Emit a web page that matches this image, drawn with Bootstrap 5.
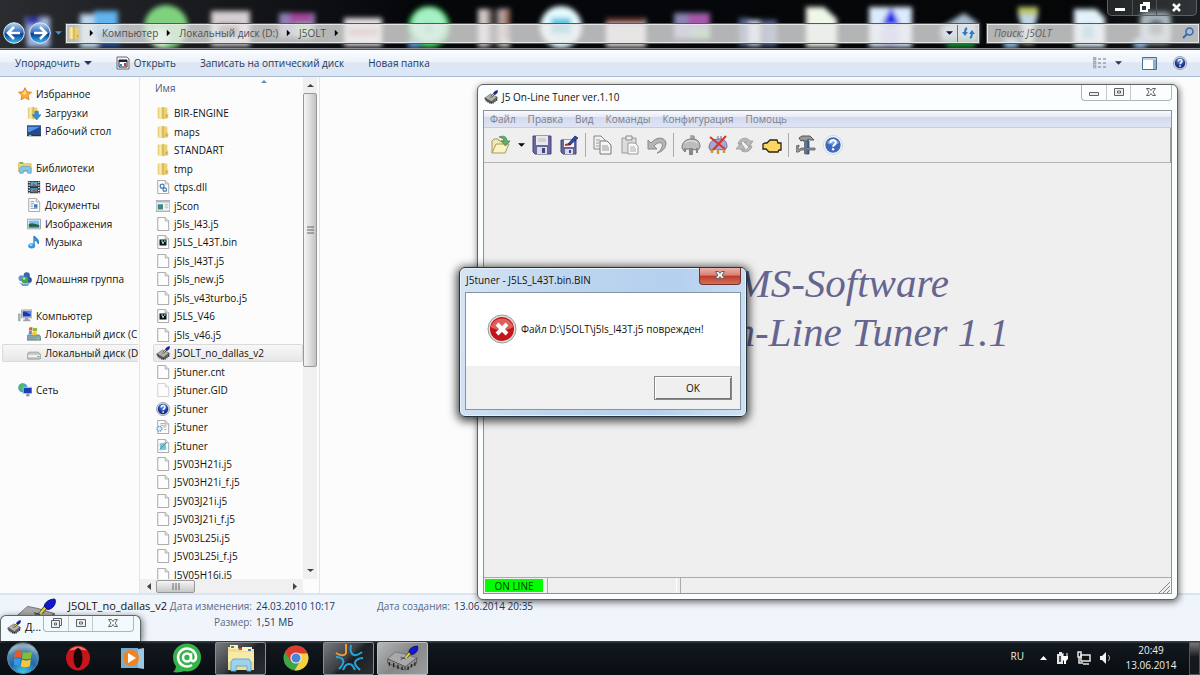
<!DOCTYPE html>
<html lang="ru">
<head>
<meta charset="utf-8">
<meta name="viewport" content="width=device-width, initial-scale=1">
<title>J5OLT</title>
<link href="https://cdn.jsdelivr.net/npm/bootstrap@5.3.0/dist/css/bootstrap.min.css" rel="stylesheet">
<style>
body{font-family:"Open Sans","Noto Sans",sans-serif;font-size:10px;line-height:16px;color:#111;background:#05080b;overflow:hidden}
svg{display:block;flex-shrink:0}
.bare{border:0;background:none;padding:0;color:inherit;font:inherit;display:flex;align-items:center}
a{color:inherit;text-decoration:none}
.i14{width:14px;height:14px}.i20{width:20px;height:20px}
.i30{width:30px;height:30px}.i34{width:34px;height:34px}
/* explorer */
.glass{height:49px;background:linear-gradient(90deg,#2a2c2f,#05070a 34%,#040608 90%,#1b1e20);border-bottom:1px solid #8b8f93;overflow:hidden}
.glass-art{inset:0;width:100%;height:50px}
.win-ctl{top:0;right:3px;height:16px;border:1px solid #5d6165;border-top:0;border-radius:0 0 5px 5px;background:rgba(110,118,124,.25)}
.win-ctl button{width:24px;justify-content:center;padding-bottom:2px}
.win-ctl button+button{border-left:1px solid #4d5154}
.win-ctl button:last-child{width:40px}
.addr-row{padding:22px 1px 5px 3px}
.recent{color:#4b8fc4}
.addr{height:19px;background:rgba(235,235,235,.76);border:1px solid #e4e6e8;outline:1px solid #55595c;color:#4b4f53}
.addr .crumb{gap:8px;color:#000}
.addr .crumb a{color:#4b4f53}
.reload{width:21px;justify-content:center}
.seek{width:212px}
.seek input{min-width:0;border:0;background:none;padding:0 6px;font-style:italic;font-size:10px;outline:0}
.seek input::placeholder{color:#5b5f62;opacity:1}
.cmdbar{height:28px;background:linear-gradient(#fafcff,#edf3fb 45%,#dce6f4 50%,#dde8f6);border-bottom:1px solid #a9bbd5;border-top:1px solid #555;color:#1e395b;padding:0 13px 0 15px}
.cols{background:#fcfcfc;min-height:0}
.side{width:140px;border-right:1px solid #dbe6f3;padding:8px 1px 0 2px;overflow:hidden}
.tree,.files{display:grid;grid-auto-rows:minmax(0,1fr);list-style:none;margin:0;padding:0}
.tree{height:314px}
.tree a,.files a{display:flex;align-items:center;height:100%;white-space:nowrap;overflow:hidden;border:1px solid transparent;border-radius:2px}
.tree a{gap:4px;padding-left:15px}
.tree .sub{padding-left:24px}
.files a{gap:4px;padding-left:2px}
.tree .on,.files .on{background:linear-gradient(#f7f7f7,#e7e7e7);border-color:#dadada}
.tree .on{border-right:0;border-radius:2px 0 0 2px}
.listing{width:180px;border-right:1px solid #dbe6f3}
.colhead{height:27px;padding:3px 36px 0 15px;color:#4d607c}
.files{height:480px;margin-left:13px}
.clip{overflow:hidden;min-height:0}
.vbar{width:14px;background:#f0f0f0;margin-right:2px;padding:2px 0}
.vthumb{height:274px;border:1px solid #989898;border-radius:2px;background:linear-gradient(90deg,#f5f5f5,#dcdcdc 55%,#c2c2c2)}
.hbar{height:14px;background:#f0f0f0;margin-right:16px;padding:0 5px 0 6px}
.hthumb{width:39px;height:13px;border:1px solid #989898;border-radius:2px;background:linear-gradient(#f5f5f5,#dedede 50%,#c6c6c6)}
.info{height:48px;background:#f0f4fb;border-top:2px solid #d9e5f3;padding:3px 0 0 16px;color:#5a6b82}
.info .val{color:#1e395b}
.info-chip{width:42px;height:42px;margin-right:10px}
.info-grid{display:grid;grid-template-columns:84px 115px 75px auto;column-gap:4px;align-content:start}
.sel-name{font-size:11px;width:100px;color:#111}
/* floating windows */
.aero{background:#fbfefe;border:1px solid #5f6467;border-radius:6px;box-shadow:1px 2px 7px rgba(0,0,0,.6)}
.tuner{left:477px;top:84px;right:22px;bottom:75px;padding:0 5px 5px}
.tuner-title{height:25px;padding:0 0 2px 1px;gap:4px}
.ctl{border:1px solid #b1b4b7;border-top:0;border-radius:0 0 4px 4px;height:16px}
.ctl button{justify-content:center;width:24px}
.ctl button+button{border-left:1px solid #c6c9cc}
.ctl button:last-child{width:41px}
.client{border:1px solid #8f9193;background:#efefef;min-height:0}
.menu{height:17px;background:linear-gradient(#fafbfe,#e8ebf7 35%,#d4daee 40%,#dfe4f4);border-bottom:1px solid #c8cbd8;color:#7b7f88;padding-left:6px;gap:12px}
.tools{height:35px;border-bottom:1px solid #b5b5b5;border-right:1px solid #999;padding-left:3px}
.tools button{width:27px;height:27px;justify-content:center}
.tools .drop{width:14px}
.tsep{width:1px;height:24px;background:#aaa;margin:0 3px}
.splash{font:italic 41px/49px "Liberation Serif",serif;color:#65658f;padding:96px 0 0 172px}
.splash .l1{padding-left:60px}
.stat{height:16px;gap:3px;border-top:1px solid #aaa}
.stat>div{border-left:1px solid #aaa;border-right:1px solid #fff}
.stat .online{width:60px;background:#0f0;color:#030;text-align:center;line-height:15px;border:1px solid #eee}
.stat .cell{width:130px}
.msg{left:459px;top:267px;width:288px;height:150px;border:1px solid #26323c;border-radius:6px;background:linear-gradient(100deg,#d5e5f5,#bdd5ee 35%,#b4d0ee 70%,#cfe2f4);box-shadow:inset 0 0 0 1px #e6f2fb,0 2px 10px 2px rgba(0,0,0,.75);padding:0 5px 6px}
.msg-title{height:24px;padding-left:1px}
.msg-close{width:42px;height:17px;justify-content:center;border:1px solid #70322e;border-top:0;border-radius:0 0 4px 4px;background:linear-gradient(#eab3a8,#d98072 45%,#bd3a27 50%,#d4705a)}
.msg-body{border:1px solid #8494a5;background:#fff;min-height:0}
.msg-text{padding:0 0 2px 21px}
.msg-foot{height:43px;background:#f0f0f0;padding:0 8px 0 0}
.okbtn{width:78px;height:24px;justify-content:center;background:#efefef;border:1px solid #888;box-shadow:inset 1px 1px #fff,inset -1px -1px #777}
.mini{left:0;bottom:34px;width:141px;height:26px;padding:0 6px 3px;border-bottom:0;border-radius:6px 6px 0 0;background:#f3fafd}
.mini-t{font-size:11px;width:19px}
/* taskbar */
.taskbar{height:34px;background:linear-gradient(#3f484e,#12181d 8%,#080d12);color:#eee;gap:3px}
.startb{width:50px;height:34px;justify-content:center;padding-right:4px}
.tb{width:51px;height:33px;justify-content:center;border:1px solid transparent;border-radius:2px}
.tb.open{border-color:#8a8e91;background:linear-gradient(135deg,#777b7e,#3c4044 45%,#1c2024 55%,#2b2f33)}
.tb.front{border-color:#bbb;background:linear-gradient(135deg,#b5b7b8,#858789 50%,#9a9c9d)}
.lang{padding-bottom:4px}
.clock{width:60px;line-height:15px;text-align:center}
.peek{width:11px;height:33px;border:1px solid #555;background:linear-gradient(#777,#16191b 45%)}
</style>
</head>
<body>
<svg width="0" height="0" class="position-absolute" aria-hidden="true">
<defs>
<linearGradient id="gy" x2="1" y2="0"><stop stop-color="#e2c35a"/><stop offset=".4" stop-color="#fbeeb0"/><stop offset="1" stop-color="#dfbb50"/></linearGradient>
<radialGradient id="gb" cx=".5" cy=".3"><stop stop-color="#6d9be8"/><stop offset="1" stop-color="#15358f"/></radialGradient>
<linearGradient id="gn" x2="0" y2="1"><stop stop-color="#b8d8f5"/><stop offset=".48" stop-color="#2c6cba"/><stop offset=".55" stop-color="#083c91"/><stop offset="1" stop-color="#3cc3f6"/></linearGradient>
<radialGradient id="gw" cx=".5" cy="1" r=".9"><stop stop-color="#3fd0f5"/><stop offset=".5" stop-color="#1f6aa8"/><stop offset=".8" stop-color="#4f86ae"/><stop offset="1" stop-color="#a9c6da"/></radialGradient>
<symbol id="folder" viewBox="0 0 16 16"><path d="M2 2l3-1 4 1v12l-4 1-3-1z" fill="url(#gy)"/><path d="M8 1l5 1v6l1 1v5l-6 1z" fill="#ecd071"/><path d="M8 1v14" stroke="#c19a36" stroke-width=".8"/><path d="M11 10h2v3h-2z" fill="#bda860"/></symbol>
<symbol id="page" viewBox="0 0 16 16"><path d="M2 .5h8.500l4 4v11H2z" fill="#fdfdfd" stroke="#9b9b9b"/><path d="M10.500 .5v4h4" fill="#ececec" stroke="#a6a6a6"/></symbol>
<symbol id="dll" viewBox="0 0 16 16"><use href="#page"/><circle cx="7" cy="7" r="2.200" fill="none" stroke="#4678b0" stroke-width="1.400"/><circle cx="10" cy="11" r="2" fill="none" stroke="#4678b0" stroke-width="1.400"/></symbol>
<symbol id="exe" viewBox="0 0 16 16"><path d="M0 2h16v12H0z" fill="#f4f4f4" stroke="#889"/><path d="M1 2h14v2H1z" fill="#a9bdd0"/><path d="M2 6h6v6H2z" fill="#3c8a80"/><path d="M10 6h4M10 8h4M10 10h4" stroke="#b8bcc0"/></symbol>
<symbol id="bin" viewBox="0 0 16 16"><use href="#page"/><path d="M4 5h8v7H4z" fill="#0b1414"/><path d="M6 6h2v2H6zM9 6h2v2H9z" fill="#6aa"/><path d="M7 8h2v2H7z" fill="#ddd"/></symbol>
<symbol id="help" viewBox="0 0 16 16"><circle cx="8" cy="8" r="7.500" fill="#d6dae0" stroke="#8b8f98" stroke-width=".8"/><circle cx="8" cy="8" r="6" fill="url(#gb)"/><path d="M5.700 6.200c.2-3 4.900-2.700 4.600 0-.2 1.500-2.200 1.400-2.200 3.200" fill="none" stroke="#fff" stroke-width="1.600"/><circle cx="8.100" cy="11.500" r="1" fill="#fff"/></symbol>
<symbol id="help2" viewBox="0 0 20 20"><circle cx="10" cy="10" r="9.500" fill="#f6f9fd" stroke="#c3cddd" stroke-width=".8"/><circle cx="10" cy="10" r="7.700" fill="#3c69b8"/><path d="M4 8a6.500 6.500 0 0 1 12 0c-3 2-9 2-12 0z" fill="#7fa3dc"/><path d="M7.300 8c.2-3.800 5.900-3.400 5.500 0-.3 2-2.700 1.800-2.700 3.800" fill="none" stroke="#fff" stroke-width="1.900"/><circle cx="10.100" cy="14.200" r="1.200" fill="#fff"/></symbol>
<symbol id="ini" viewBox="0 0 16 16"><use href="#page"/><path d="M5 4h5M5 6h7M8 8h4M9 11h3" stroke="#9ab"/><circle cx="4" cy="10" r="2.800" fill="#dfeaf2" stroke="#6c93b5" stroke-width="1.500" stroke-dasharray="1.500 .7"/></symbol>
<symbol id="log" viewBox="0 0 16 16"><use href="#page"/><path d="M4 5l7-1 1 8-7 1z" fill="#7cc4d4"/><path d="M4 12l8-8" stroke="#3d8fa8"/></symbol>
<symbol id="chip" viewBox="0 0 32 32"><path d="M2 18l13-9 15 7-13 11z" fill="#b2b2b2" stroke="#333"/><path d="M2 18v3l15 10v-4zM17 27v4l13-10v-5z" fill="#777" stroke="#222"/><path d="M5 22v4M9 24v5M13 27v4M21 27v4M25 24v4M29 21v4" stroke="#111" stroke-width="2"/><path d="M13 15l4 3M14 19l4-5" stroke="#444"/><path d="M17 15l8-8" stroke="#5d5a20" stroke-width="4"/><path d="M17 15l7-7" stroke="#e5d94a" stroke-width="2"/><path d="M22 8c0-4 5-7 9-7 1 5-3 9-7 9z" fill="#1420c8" stroke="#000050"/></symbol>
<symbol id="chipBig" viewBox="0 0 40 30"><path d="M2 16l9-8 10 2 16 5-13 11z" fill="#a9a9a9" stroke="#666" stroke-width=".8"/><path d="M2 16v5l20 8v-4zM23 25v4l13-8v-6z" fill="#8f8f8f" stroke="#444" stroke-width=".8"/><path d="M4 20v4M9 21v5M14 23v5M19 25v4M26 25v4M30 22v4M34 20v4" stroke="#222" stroke-width="1.600"/><path d="M17 14l6 2M17 17l7-4" stroke="#444"/><path d="M24 14l5-6" stroke="#66611d" stroke-width="4"/><path d="M23 15l6-7" stroke="#e5d94a" stroke-width="2"/><path d="M27 8c0-4 5-7 10-7 2 4-2 10-7 10z" fill="#1018d4" stroke="#000050" stroke-width=".8"/></symbol>
<symbol id="star" viewBox="0 0 16 16"><path d="M8 .8l2.200 4.700 5.200.6-3.900 3.400 1.100 5.200L8 12.100l-4.600 2.600 1.100-5.200L.6 6.100l5.200-.6z" fill="#fbb03c" stroke="#d97a22"/><path d="M8 3l1.300 3.500L8 9 4 6.800l2.700-.5z" fill="#ffe08a"/></symbol>
<symbol id="down" viewBox="0 0 16 16"><use href="#folder" x="-1"/><path d="M9 6h4v4h3l-5 6-5-6h3z" fill="#3490dc" stroke="#1c68b0" stroke-width=".6"/></symbol>
<symbol id="desk" viewBox="0 0 16 16"><path d="M0 2h16v10H0z" fill="#1c4b9d" stroke="#456"/><path d="M1 3h14L3 9H1z" fill="#5c93dc"/><path d="M0 12h16v2H0z" fill="#20344f"/><path d="M2 13h3" stroke="#7fd"/></symbol>
<symbol id="lib" viewBox="0 0 16 16"><path d="M0 3l1-1h4l1 1h9v9H0z" fill="#f0d67d" stroke="#c9a750" stroke-width=".7"/><path d="M2 1h4v2H2z" fill="#70b060"/><path d="M2 8l2-2h9l2 2v6h-4v-3H6v3H2z" fill="#86c6e6" stroke="#4a95bd" stroke-width=".7"/></symbol>
<symbol id="video" viewBox="0 0 16 16"><path d="M1 1h14v14H1z" fill="#243640"/><path d="M4 2h8v5H4z" fill="#58a5d4"/><path d="M4 9h8v5H4z" fill="#4f90bd"/><path d="M7 3l4 4H6zM6 14l3-4 3 4z" fill="#a6552e"/><path d="M2.500 2v13M13.500 2v13" stroke="#fff" stroke-width="1.500" stroke-dasharray="1.500 1.500"/></symbol>
<symbol id="doc" viewBox="0 0 16 16"><use href="#page"/><path d="M4 4h4M4 6h4M4 8h3M4 10h3M4 12h8" stroke="#8a9fbb"/><path d="M8 7h4v4H8z" fill="#3f77b8"/></symbol>
<symbol id="pic" viewBox="0 0 16 16"><path d="M.5 2.500h15v11H.5z" fill="#fff" stroke="#8c959c"/><path d="M2 4h12v8H2z" fill="#7cc0ea"/><path d="M2 8l4-1 8 2v3H2z" fill="#255f4b"/><path d="M2 11h12v1H2z" fill="#3f9ac0"/></symbol>
<symbol id="music" viewBox="0 0 16 16"><path d="M8 12V1c1 3 6 3 5 9-1-3-2-4-4-4" fill="#4aa6e6" stroke="#2c7fc4" stroke-width="1.400"/><ellipse cx="5.300" cy="12.300" rx="4" ry="3" fill="#3593dd"/><ellipse cx="4.500" cy="11.500" rx="2" ry="1.200" fill="#9dd3f7"/></symbol>
<symbol id="home" viewBox="0 0 16 16"><circle cx="10" cy="4" r="3.600" fill="#3564b8"/><circle cx="4" cy="7" r="3.400" fill="#5c95d5"/><circle cx="12.500" cy="9" r="3.300" fill="#2b4f9f"/><circle cx="8" cy="9" r="4" fill="#47a34b"/><circle cx="7" cy="7.500" r="1.500" fill="#b9e3a9"/><path d="M1 11c4 3 8 3 13 1l-3 4H5z" fill="#6e9fd8"/></symbol>
<symbol id="comp" viewBox="0 0 16 16"><path d="M0 5h3v9H0z" fill="#a9b1ad"/><path d="M4 1h12v9H4z" fill="#d0d5da" stroke="#8b9299" stroke-width=".8"/><path d="M5.500 2.500h9v6h-9z" fill="#1738b5"/><path d="M8 2.500h6.500v4z" fill="#5f87e8"/><path d="M8 10h4v2h2v2H6v-2h2z" fill="#9ba2a8"/></symbol>
<symbol id="disk" viewBox="0 0 16 16"><path d="M2 7h11l3 3v4l-2 1H1l-1-1v-4z" fill="#c9ccce" stroke="#868b8e" stroke-width=".8"/><path d="M1 9.500h14v4H1z" fill="#f2f2f2" stroke="#989da0" stroke-width=".6"/><path d="M12 12h2" stroke="#3b9b3b"/></symbol>
<symbol id="flag" viewBox="0 0 16 16"><path d="M1 1c2-1 4-1 6 0L6 7C4 6 2 6 0 7z" fill="#e75a28"/><path d="M8 1.500c3 1 5 1 8 0l-1 6c-3 1-5 1-8 0z" fill="#83bd36"/><path d="M0 8c2-1 4-1 6 0l-1 6c-2-1-4-1-6 0z" fill="#3d94e5"/><path d="M7 8.500c3 1 5 1 8 0l-1 6c-3 1-5 1-8 0z" fill="#f8c63a"/></symbol>
<symbol id="sysdisk" viewBox="0 0 16 16"><path d="M1 9h13l2 3v3H0v-3z" fill="#8ba2ac" stroke="#5f747d" stroke-width=".8"/><use href="#flag" x="2" y="0" width="10" height="10"/><path d="M11 13.500h3" stroke="#6f6"/></symbol>
<symbol id="net" viewBox="0 0 16 16"><circle cx="5.500" cy="5.500" r="5.300" fill="#3ba5d8"/><path d="M2 2c3-3 6-1 5 2S4 6 5 9c-3 0-5-3-3-7z" fill="#55b85a"/><path d="M6 5h10v7H6z" fill="#1a3fb5" stroke="#bcc5cd"/><path d="M10 12h3v3h-4z" fill="#8a9299"/></symbol>
<symbol id="min" viewBox="0 0 16 12"><path d="M3.500 5.500h9v3h-9z" fill="#eee" stroke="#5d636b"/></symbol>
<symbol id="max" viewBox="0 0 16 12"><path d="M3.500 1.500h9v7h-9z" fill="#eee" stroke="#5d636b"/><path d="M6.500 4h3v2h-3z" fill="#fff" stroke="#5d636b"/></symbol>
<symbol id="restore" viewBox="0 0 16 12"><path d="M5.500 .5h8v7h-8z" fill="#eee" stroke="#5d636b"/><path d="M3.500 2.500h8v7h-8z" fill="#eee" stroke="#5d636b"/><path d="M6.500 5h2v2h-2z" fill="#fff" stroke="#5d636b"/></symbol>
<symbol id="cross" viewBox="0 0 16 12"><path d="M3.500 1.500h3L8 3.500l1.500-2h3L10 5l2.500 3.500h-3L8 6.500l-1.500 2h-3L6 5z" fill="#fff" stroke="#5d636b"/></symbol>
<symbol id="tri" viewBox="0 0 8 6"><path d="M0 1h8L4 5z" fill="currentColor"/></symbol>
<symbol id="triR" viewBox="0 0 6 8"><path d="M1 0v8l4-4z" fill="currentColor"/></symbol>
<symbol id="tOpen" viewBox="0 0 20 20"><path d="M1 18V6l2-2h4l1 2h6v3" fill="#f3e9b2" stroke="#a5985e"/><path d="M1 18L5 9h13l-4 9z" fill="#fbf3c4" stroke="#a5985e"/><path d="M8 2c5-2 8 0 8 4h3l-4.500 5L10 6h3c0-2-2-3-5-4z" fill="#66ab69" stroke="#39823e" stroke-width=".7"/></symbol>
<symbol id="tSave" viewBox="0 0 20 20"><path d="M1 1h18v18H3l-2-2z" fill="#66669c" stroke="#45457a"/><path d="M4 1h12v9H4z" fill="#e8e8ec"/><path d="M6 4h8M6 6h8" stroke="#bbb"/><path d="M5 12h10v7H5z" fill="#d8dae4"/><path d="M10 13h3v5h-3z" fill="#44447e"/></symbol>
<symbol id="tSaveAs" viewBox="0 0 20 20"><path d="M2 5h15v14H4l-2-2z" fill="#66669c" stroke="#45457a"/><path d="M5 5h10v7H5z" fill="#f2f2f4"/><path d="M6 10l6-1" stroke="#c22" stroke-width="2"/><path d="M6 14h8v5H6z" fill="#d8dae4"/><path d="M10 15h2v3h-2z" fill="#44447e"/><path d="M9 9l7-8 3 2-8 7z" fill="#2a4cb0" stroke="#181840" stroke-width=".7"/></symbol>
<symbol id="tCopy" viewBox="0 0 20 20"><path d="M1 1h7l4 4v9H1z" fill="#f1f1f1" stroke="#888"/><path d="M7 6h7l4 4v9H7z" fill="#f5f5f5" stroke="#777"/><path d="M3 5h4M3 8h3M3 11h3M9 11h6M9 13h7M9 15h7" stroke="#999"/></symbol>
<symbol id="tPaste" viewBox="0 0 20 20"><path d="M2 3h14v15H2z" fill="#dcdcdc" stroke="#999"/><path d="M6 1h6v4H6z" fill="#eee" stroke="#888"/><path d="M8 8h7l3 3v8H8z" fill="#fafafa" stroke="#999"/><path d="M10 12h5M10 14h6M10 16h6" stroke="#aaa"/></symbol>
<symbol id="tUndo" viewBox="0 0 20 20"><path d="M1 5v9h9L7 11c4-5 10-4 8 1-1 3-3 5-5 6 5-1 9-5 9-10C18 2 10 1 4 8z" fill="#b5b5b5" stroke="#888"/></symbol>
<symbol id="tPlug" viewBox="0 0 20 20"><path d="M10 5V1h2v4M13 5V1" stroke="#999" fill="none" stroke-width="1.500"/><path d="M1 13c0-6 4-9 10-9s8 3 8 8l-2 3-11-1-3 2z" fill="#bcbcbc" stroke="#777"/><path d="M4 8c3-3 9-3 12 0" stroke="#eee" fill="none"/><path d="M4 13v4M9 13v6h2v-6M16 13v5" stroke="#888" stroke-width="2" fill="none"/></symbol>
<symbol id="tUnplug" viewBox="0 0 20 20"><path d="M10 5V1M13 5V1" stroke="#999" stroke-width="1.500"/><path d="M1 13c0-6 4-9 10-9s8 3 8 8l-2 3-11-1-3 2z" fill="#a5a8d8" stroke="#6d6f9b"/><path d="M4 13v5M10 14v5M16 13v5" stroke="#c69a3a" stroke-width="2.500"/><path d="M2 2l15 12M18 1L5 15" stroke="#d8342a" stroke-width="2"/></symbol>
<symbol id="tSync" viewBox="0 0 20 20"><path d="M3 9c1-6 9-8 12-3h3l-4 6-5-5h3c-2-2-6-1-6 2zM17 11c-1 6-9 8-12 3H1l5-6 4 6H7c3 2 7 0 7-3z" fill="#b9b9b9" stroke="#999" stroke-width=".8"/></symbol>
<symbol id="tEng" viewBox="0 0 20 20"><path d="M1 9l2-1h2l3-3h7l1 3h3v7h-2l-1 2H7l-3-3H1z" fill="#fbd667" stroke="#2c2510" stroke-width="1.300"/></symbol>
<symbol id="tTool" viewBox="0 0 20 20"><path d="M3 3l3-2h8l4 4h-4l-2-1v3H8V5L5 6z" fill="#999" stroke="#555"/><path d="M9 6h4v13H9z" fill="#3567a8" stroke="#243c68" stroke-width=".7"/><path d="M0 11l3-1v2H2v2h2l1-1h14v2H5l-2 2H0z" fill="#999" stroke="#555" stroke-width=".7"/><path d="M8 5h3v14H8z" fill="#6b7484"/></symbol>
<filter id="soft" x="-5%" y="-20%" width="110%" height="140%"><feGaussianBlur stdDeviation="2.500"/></filter>
</defs>
</svg>

<div class="vh-100 d-flex flex-column position-relative">
<main class="flex-grow-1 d-flex flex-column clip">
<header class="glass position-relative flex-shrink-0">
<svg class="glass-art position-absolute" viewBox="0 0 1200 50" preserveAspectRatio="xMinYMin slice" aria-hidden="true"><g filter="url(#soft)">
<path d="M25 17h25v30H27z" fill="#a2b4dc"/><path d="M26 17h14v8H26z" fill="#3138b0"/>
<path d="M80 14h18v34H80z" fill="#bcd6ec"/><path d="M94 11h24v26H94z" fill="#62b4ee"/><path d="M98 32h22v14H98z" fill="#1b57a4"/>
<circle cx="166" cy="27" r="22" fill="#7ed27e"/><circle cx="160" cy="38" r="9" fill="#e2fbdc"/>
<path d="M211 11h39v35h-39z" fill="#d5cfd3"/><path d="M218 24h22v14h-22z" fill="#6f5650"/>
<path d="M279 13h36v24h-36z" fill="#8c7fb0"/><path d="M290 13h22v10h-22z" fill="#a547a0"/><path d="M295 24h16v14h-16z" fill="#91c68e"/>
<path d="M344 18h38v28h-38z" fill="#e8e0e4"/><path d="M348 28h30v8h-30z" fill="#cf8f86"/>
<circle cx="429" cy="27" r="21" fill="#2fc14f"/><circle cx="429" cy="25" r="17" fill="#a5f0c5"/><circle cx="429" cy="29" r="5" fill="#6bd694"/><path d="M408 40h12v8h-12z" fill="#5a8fd0"/>
<path d="M478 9h32v38h-32z" fill="#cfc8c6"/><path d="M488 9h12v38h-12z" fill="#473d3e"/><path d="M503 10h7v30h-7z" fill="#a06c60"/>
<circle cx="561" cy="27" r="21" fill="#e5faff"/><path d="M551 18h20v16h-20z" fill="#58c5df"/>
<path d="M606 19h40v28h-40z" fill="#dcd1d1"/><path d="M606 18h39v6h-39z" fill="#7a3d35"/>
<path d="M674 13h36v26h-36z" fill="#8883b4"/><path d="M688 14h22v12h-22z" fill="#a656ab"/><path d="M690 29h20v9h-20z" fill="#76b877"/>
<path d="M739 18h10v28h-10zM763 20h14v26h-14z" fill="#55628f"/><path d="M749 20h12v26h-12z" fill="#cbd6ec"/>
<path d="M806 7h18l13 12v28h-31z" fill="#eff7e9"/>
<path d="M869 7h43v40h-43z" fill="#dcebfc"/><path d="M891 7l9 18h-18z" fill="#151fe6"/><circle cx="890" cy="36" r="10" fill="#c4bdf4"/>
<path d="M940 28l24-15 14 10v18h-36z" fill="#a9bed0"/><path d="M947 38h28v10h-28z" fill="#14802e"/>
<path d="M1018 7h20v8h-20z" fill="#bbc766"/><path d="M1018 15h20l-5 16h-10z" fill="#bfd5e8"/><path d="M1004 38h14v10h-14z" fill="#8ab2dc"/><path d="M1022 30h12v14h-12z" fill="#c9c9b8"/>
<path d="M1074 9h22l9 9v29h-31z" fill="#e3f2fb"/><path d="M1082 25h12v14h-12z" fill="#6ec4e6"/>
<rect x="1140" y="12" width="31" height="32" rx="6" fill="#a9b5bd"/><circle cx="1156" cy="28" r="8" fill="#4c555c"/><path d="M1134 38h12v10h-12z" fill="#8ab2dc"/>
</g></svg>
<div class="addr-row position-relative d-flex align-items-center">
<button class="bare" aria-label="Назад"><svg width="22" height="22" viewBox="0 0 22 22"><circle cx="11" cy="11" r="10.300" fill="url(#gn)" stroke="#dbe6f0"/><path d="M17 11H6M11 5l-6 6 6 6" stroke="#fff" stroke-width="2.600" fill="none"/></svg></button>
<button class="bare ms-1" aria-label="Вперёд"><svg width="22" height="22" viewBox="0 0 22 22"><circle cx="11" cy="11" r="10.300" fill="url(#gn)" stroke="#dbe6f0"/><path d="M5 11h11M11 5l6 6-6 6" stroke="#fff" stroke-width="2.600" fill="none"/></svg></button>
<button class="bare ms-1 recent" aria-label="Недавние"><svg width="7" height="6"><use href="#tri"/></svg></button>
<nav class="addr flex-grow-1 d-flex align-items-center ms-1" aria-label="Путь">
<svg class="i14"><use href="#folder"/></svg>
<div class="crumb d-flex align-items-center ms-2">
<svg width="5" height="8"><use href="#triR"/></svg><a href="#">Компьютер</a>
<svg width="5" height="8"><use href="#triR"/></svg><a href="#">Локальный диск (D:)</a>
<svg width="5" height="8"><use href="#triR"/></svg><a href="#">J5OLT</a>
<svg width="5" height="8"><use href="#triR"/></svg></div>
<button class="bare ms-auto me-1" aria-label="Список"><svg width="7" height="6" color="#101048"><use href="#tri"/></svg></button>
<button class="bare h-100 reload border-start border-secondary" aria-label="Обновить"><svg width="13" height="14" viewBox="0 0 13 14"><path d="M5 2c-2 1-2 3-2 5M8 12c2-1 2-3 2-5" stroke="#2b7cc4" stroke-width="2" fill="none"/><path d="M0 6h6l-3 4zM7 8h6l-3-4z" fill="#2b7cc4"/></svg></button>
</nav>
<form class="addr seek d-flex align-items-center ms-2"><input class="flex-grow-1" type="search" placeholder="Поиск: J5OLT" aria-label="Поиск"><svg width="12" height="12" class="me-1"><circle cx="7.500" cy="4.500" r="3.500" fill="none" stroke="#2b6fb8" stroke-width="1.500"/><path d="M5 7l-4 4" stroke="#2b6fb8" stroke-width="2"/></svg></form>
</div>
<div class="win-ctl d-flex position-absolute">
<button class="bare" aria-label="Свернуть"><svg width="12" height="12"><path d="M1 7h10v3H1z" fill="#fff"/></svg></button>
<button class="bare" aria-label="Восстановить"><svg width="12" height="12"><path d="M4 2h6v6M2 4h6v6H2z" stroke="#fff" stroke-width="2" fill="none"/></svg></button>
<button class="bare" aria-label="Закрыть"><svg width="12" height="12"><path d="M2 3l7 7M9 3l-7 7" stroke="#fff" stroke-width="2.500"/></svg></button>
</div>
</header>
<div class="cmdbar flex-shrink-0 d-flex align-items-center">
<button class="bare gap-1">Упорядочить <svg width="8" height="6"><use href="#tri"/></svg></button>
<button class="bare gap-1 ms-4"><svg width="14" height="14"><path d="M1 1h10l2 2v10H1z" fill="#f4f4f4" stroke="#667"/><path d="M3 4h8v7H3z" fill="#fff" stroke="#223"/><path d="M3 4h8v2H3z" fill="#223"/><path d="M4 8h2v2H4z" fill="#28c"/><path d="M8 7h2v3H8z" fill="#d33"/></svg>Открыть</button>
<button class="bare ms-4">Записать на оптический диск</button>
<button class="bare ms-4">Новая папка</button>
<button class="bare ms-auto gap-2" aria-label="Вид"><svg width="14" height="12"><path d="M0 0h3v3H0zM0 4h3v3H0zM0 8h3v3H0z" fill="#c9b6b4" stroke="#8494a8" stroke-width=".5"/><path d="M5 2h3M10 2h3M5 6h3M10 6h3M5 10h3M10 10h3" stroke="#6a7c92"/></svg><svg width="7" height="6"><use href="#tri"/></svg></button>
<button class="bare ms-3" aria-label="Область просмотра"><svg width="15" height="13" class="ms-1"><path d="M.5.5h14v12H.5z" fill="#fff" stroke="#4d6f92"/><path d="M1 1h13v2H1z" fill="#b9cfe2"/><path d="M11 3h3v9h-3z" fill="#8db1c8"/></svg></button>
<button class="bare ms-3" aria-label="Справка"><svg class="i14"><use href="#help"/></svg></button>
</div>
<div class="cols flex-grow-1 d-flex">
<nav class="side flex-shrink-0" aria-label="Область переходов">
<ul class="tree">
<li><a href="#"><svg class="i14"><use href="#star"/></svg>Избранное</a></li>
<li><a class="sub" href="#"><svg class="i14"><use href="#down"/></svg>Загрузки</a></li>
<li><a class="sub" href="#"><svg class="i14"><use href="#desk"/></svg>Рабочий стол</a></li>
<li></li>
<li><a href="#"><svg class="i14"><use href="#lib"/></svg>Библиотеки</a></li>
<li><a class="sub" href="#"><svg class="i14"><use href="#video"/></svg>Видео</a></li>
<li><a class="sub" href="#"><svg class="i14"><use href="#doc"/></svg>Документы</a></li>
<li><a class="sub" href="#"><svg class="i14"><use href="#pic"/></svg>Изображения</a></li>
<li><a class="sub" href="#"><svg class="i14"><use href="#music"/></svg>Музыка</a></li>
<li></li>
<li><a href="#"><svg class="i14"><use href="#home"/></svg>Домашняя группа</a></li>
<li></li>
<li><a href="#"><svg class="i14"><use href="#comp"/></svg>Компьютер</a></li>
<li><a class="sub" href="#"><svg class="i14"><use href="#sysdisk"/></svg>Локальный диск (C</a></li>
<li><a class="sub on" href="#"><svg class="i14"><use href="#disk"/></svg>Локальный диск (D</a></li>
<li></li>
<li><a href="#"><svg class="i14"><use href="#net"/></svg>Сеть</a></li>
</ul>
</nav>
<section class="listing flex-shrink-0 d-flex flex-column clip">
<div class="flex-grow-1 d-flex clip">
<div class="flex-grow-1 clip">
<div class="colhead d-flex align-items-start justify-content-between">Имя<svg width="6" height="3"><path d="M0 3l3-3 3 3z" fill="#5b8fb5"/></svg></div>
<ul class="files">
<li><a href="#"><svg class="i14"><use href="#folder"/></svg>BIR-ENGINE</a></li>
<li><a href="#"><svg class="i14"><use href="#folder"/></svg>maps</a></li>
<li><a href="#"><svg class="i14"><use href="#folder"/></svg>STANDART</a></li>
<li><a href="#"><svg class="i14"><use href="#folder"/></svg>tmp</a></li>
<li><a href="#"><svg class="i14"><use href="#dll"/></svg>ctps.dll</a></li>
<li><a href="#"><svg class="i14"><use href="#exe"/></svg>j5con</a></li>
<li><a href="#"><svg class="i14"><use href="#page"/></svg>j5ls_l43.j5</a></li>
<li><a href="#"><svg class="i14"><use href="#bin"/></svg>J5LS_L43T.bin</a></li>
<li><a href="#"><svg class="i14"><use href="#page"/></svg>j5ls_l43T.j5</a></li>
<li><a href="#"><svg class="i14"><use href="#page"/></svg>j5ls_new.j5</a></li>
<li><a href="#"><svg class="i14"><use href="#page"/></svg>j5ls_v43turbo.j5</a></li>
<li><a href="#"><svg class="i14"><use href="#bin"/></svg>J5LS_V46</a></li>
<li><a href="#"><svg class="i14"><use href="#page"/></svg>j5ls_v46.j5</a></li>
<li><a class="on" href="#"><svg class="i14"><use href="#chip"/></svg>J5OLT_no_dallas_v2</a></li>
<li><a href="#"><svg class="i14"><use href="#page"/></svg>j5tuner.cnt</a></li>
<li><a href="#"><svg class="i14 opacity-50"><use href="#page"/></svg>j5tuner.GID</a></li>
<li><a href="#"><svg class="i14"><use href="#help"/></svg>j5tuner</a></li>
<li><a href="#"><svg class="i14"><use href="#ini"/></svg>j5tuner</a></li>
<li><a href="#"><svg class="i14"><use href="#log"/></svg>j5tuner</a></li>
<li><a href="#"><svg class="i14"><use href="#page"/></svg>J5V03H21i.j5</a></li>
<li><a href="#"><svg class="i14"><use href="#page"/></svg>J5V03H21i_f.j5</a></li>
<li><a href="#"><svg class="i14"><use href="#page"/></svg>J5V03J21i.j5</a></li>
<li><a href="#"><svg class="i14"><use href="#page"/></svg>J5V03J21i_f.j5</a></li>
<li><a href="#"><svg class="i14"><use href="#page"/></svg>J5V03L25i.j5</a></li>
<li><a href="#"><svg class="i14"><use href="#page"/></svg>J5V03L25i_f.j5</a></li>
<li><a href="#"><svg class="i14"><use href="#page"/></svg>J5V05H16i.j5</a></li>
</ul>
</div>
<div class="vbar d-flex flex-column align-items-center" aria-hidden="true">
<svg width="7" height="14" viewBox="0 0 7 14"><path d="M0 8h7L3.500 5z" fill="#444"/></svg>
<div class="vthumb w-100 d-flex align-items-center justify-content-center"><svg width="7" height="8"><path d="M0 1h7M0 4h7M0 7h7" stroke="#666"/></svg></div>
<svg class="mt-auto" width="7" height="12" viewBox="0 0 7 12"><path d="M0 4h7L3.500 7z" fill="#444"/></svg>
</div>
</div>
<div class="hbar d-flex align-items-center flex-shrink-0" aria-hidden="true">
<svg width="6" height="7"><path d="M5 0v7L1 3.500z" fill="#444"/></svg>
<div class="hthumb d-flex align-items-center justify-content-center ms-1"><svg width="8" height="7"><path d="M1 0v7M4 0v7M7 0v7" stroke="#666"/></svg></div>
<svg class="ms-auto" width="6" height="7"><path d="M1 0v7l4-3.500z" fill="#444"/></svg>
</div>
</section>
</div>
<footer class="info d-flex flex-shrink-0 clip">
<svg class="info-chip" viewBox="0 0 40 40"><use href="#chipBig" width="40" height="30"/></svg>
<div class="sel-name text-nowrap">J5OLT_no_dallas_v2</div>
<div class="info-grid text-nowrap">
<span class="text-end">Дата изменения:</span><span class="val">24.03.2010 10:17</span>
<span class="text-end">Дата создания:</span><span class="val">13.06.2014 20:35</span>
<span class="text-end">Размер:</span><span class="val">1,51 МБ</span>
</div>
</footer>
</main>

<footer class="taskbar d-flex align-items-center flex-shrink-0">
<button class="bare startb" aria-label="Пуск"><svg class="i34" viewBox="0 0 34 34"><circle cx="17" cy="17" r="15.500" fill="url(#gw)" stroke="#5d86a8"/><use href="#flag" x="8" y="9" width="18" height="18"/></svg></button>
<button class="bare tb" aria-label="Opera"><svg class="i30" viewBox="0 0 30 30"><ellipse cx="14" cy="15" rx="12" ry="12.500" fill="#c8141c"/><path d="M5 8C9 2 19 2 23 8c-4-2-14-2-18 0z" fill="#ef7d77"/><ellipse cx="14" cy="15" rx="4.500" ry="10" fill="#120607"/></svg></button>
<button class="bare tb" aria-label="Media Player"><svg class="i30" viewBox="0 0 30 30"><path d="M3 5h17v20H3z" fill="#79aed2"/><path d="M20 6l6-1v21l-6-1z" fill="#9cc8e2"/><circle cx="13" cy="15" r="8" fill="#f28420"/><path d="M10 10v10l8-5z" fill="#fff"/></svg></button>
<button class="bare tb" aria-label="Агент"><svg class="i30" viewBox="0 0 30 30"><circle cx="15" cy="14.500" r="14" fill="#35b34a"/><path d="M1 29c3-2 3-5 3-9l9 8c-4 1-8 2-12 1z" fill="#35b34a"/><circle cx="15" cy="14.500" r="4" fill="none" stroke="#fff" stroke-width="2.500"/><path d="M19 10v6c1 4 5 2 5-2a9 9 0 1 0-4 8" fill="none" stroke="#fff" stroke-width="2.500"/></svg></button>
<button class="bare tb open" aria-label="Проводник"><svg class="i30" viewBox="0 0 30 30"><path d="M2 4h9l2 2h15v21H2z" fill="#f2dc8c"/><path d="M4 2h8v4H4zM16 4h10v4H16z" fill="#fff3c0"/><path d="M5 3h3v2H5z" fill="#3a9a4a"/><path d="M13 5h3v2h-3z" fill="#d4463a"/><path d="M22 6h3v2h-3z" fill="#3a80c4"/><path d="M2 9h26v10H2z" fill="#f8e9a8"/><path d="M5 19l2-3h16l2 3v9h-4v-5H10v5H5z" fill="#9bd3ee" stroke="#63a9d1"/></svg></button>
<button class="bare tb" aria-label="Chrome"><svg class="i30" viewBox="0 0 30 30"><circle cx="16" cy="15" r="12.500" fill="#3fa648"/><path d="M5 9A12.500 12.500 0 0 1 27.500 10.500H16L10.500 18z" fill="#de3b2e"/><path d="M27.500 10.500A12.500 12.500 0 0 1 14.500 27.500l6-10-3-7z" fill="#f8cf3c"/><circle cx="16" cy="15" r="5.600" fill="#eef"/><circle cx="16" cy="15" r="4.500" fill="#4786d6"/></svg></button>
<button class="bare tb open" aria-label="Программа"><svg class="i30" viewBox="0 0 30 30" fill="none" stroke-width="2"><path d="M2 10c4 3 9 3 10 0V1" stroke="#f09432"/><path d="M17 2c-1 5 0 9 3 10s5-1 8-3M29 15c-4 0-8 2-8 5s3 5 5 7M21 27c-2-4-3-6-6-6s-4 2-6 6M5 26c4-4 5-7 4-9s-4-3-7-3" stroke="#23a5dc"/></svg></button>
<button class="bare tb front" aria-label="J5 On-Line Tuner"><svg width="34" height="28"><use href="#chipBig"/></svg></button>
<div class="ms-auto d-flex align-items-center">
<span class="lang me-3">RU</span>
<svg width="7" height="6"><path d="M0 5h7L3.500 1z" fill="#fff"/></svg>
<svg width="14" height="14" class="ms-2"><path d="M2 3h6v10H2zM4 1h3v2H4z" fill="#e6e6e6"/><path d="M4 5h2v6H4z" fill="#555"/><path d="M8 2v3M12 2v3" stroke="#fff"/><path d="M7 5h6v3l-2 2v3H9v-3L7 8z" fill="#fff"/></svg>
<svg width="14" height="14" class="ms-2"><path d="M4 4h9v6H4z" fill="#111" stroke="#e6e6e6" stroke-width="1.500"/><path d="M6 13h6M1 1h3v5H1zM2 6v6h4" stroke="#e6e6e6" stroke-width="1.500" fill="none"/></svg>
<svg width="14" height="14" class="ms-2"><path d="M1 5h2l4-4v12L3 9H1z" fill="#f2f2f2"/><path d="M9 4c2 2 2 4 0 6" stroke="#ccc" fill="none"/></svg>
<div class="clock ms-2 me-1">20:49<br>13.06.2014</div>
<button class="bare peek ms-1" aria-label="Показать рабочий стол"></button>
</div>
</footer>

<section class="aero tuner position-absolute d-flex flex-column">
<div class="tuner-title d-flex align-items-center flex-shrink-0">
<svg class="i14"><use href="#chip"/></svg><span>J5 On-Line Tuner ver.1.10</span>
<div class="ctl d-flex ms-auto align-self-start">
<button class="bare" aria-label="Свернуть"><svg width="16" height="12"><use href="#min"/></svg></button>
<button class="bare" aria-label="Развернуть"><svg width="16" height="12"><use href="#max"/></svg></button>
<button class="bare" aria-label="Закрыть"><svg width="16" height="12"><use href="#cross"/></svg></button>
</div>
</div>
<div class="client flex-grow-1 d-flex flex-column">
<div class="menu d-flex align-items-center flex-shrink-0">
<button class="bare">Файл</button><button class="bare">Правка</button><button class="bare">Вид</button><button class="bare">Команды</button><button class="bare">Конфигурация</button><button class="bare">Помощь</button>
</div>
<div class="tools d-flex align-items-center flex-shrink-0">
<button class="bare" aria-label="Открыть"><svg class="i20"><use href="#tOpen"/></svg></button>
<button class="bare drop" aria-label="Недавние файлы"><svg width="7" height="6" color="#000"><use href="#tri"/></svg></button>
<button class="bare" aria-label="Сохранить"><svg class="i20"><use href="#tSave"/></svg></button>
<button class="bare" aria-label="Сохранить как"><svg class="i20"><use href="#tSaveAs"/></svg></button>
<span class="tsep"></span>
<button class="bare" aria-label="Копировать"><svg class="i20"><use href="#tCopy"/></svg></button>
<button class="bare" aria-label="Вставить"><svg class="i20"><use href="#tPaste"/></svg></button>
<button class="bare" aria-label="Отменить"><svg class="i20"><use href="#tUndo"/></svg></button>
<span class="tsep"></span>
<button class="bare" aria-label="Подключить"><svg class="i20"><use href="#tPlug"/></svg></button>
<button class="bare" aria-label="Отключить"><svg class="i20"><use href="#tUnplug"/></svg></button>
<button class="bare" aria-label="Обновить"><svg class="i20"><use href="#tSync"/></svg></button>
<button class="bare" aria-label="Двигатель"><svg class="i20"><use href="#tEng"/></svg></button>
<span class="tsep"></span>
<button class="bare" aria-label="Настройки"><svg class="i20"><use href="#tTool"/></svg></button>
<button class="bare" aria-label="Справка"><svg class="i20"><use href="#help2"/></svg></button>
</div>
<div class="splash flex-grow-1 text-nowrap clip"><div class="l1">SMS-Software</div><div>J5 On-Line Tuner 1.1</div></div>
<div class="stat d-flex flex-shrink-0"><div class="online">ON LINE</div><div class="cell"></div><div class="flex-grow-1 d-flex justify-content-end align-items-end"><svg width="12" height="12"><path d="M1 12L12 1M5 12l7-7M9 12l3-3" stroke="#888"/></svg></div></div>
</div>
</section>

<section class="msg position-absolute d-flex flex-column" role="alertdialog" aria-labelledby="mt" aria-describedby="mb">
<div class="msg-title d-flex align-items-center flex-shrink-0"><span id="mt">J5tuner - J5LS_L43T.bin.BIN</span>
<button class="bare msg-close ms-auto align-self-start" aria-label="Закрыть"><svg width="16" height="12"><use href="#cross"/></svg></button></div>
<div class="msg-body flex-grow-1 d-flex flex-column">
<div class="msg-text flex-grow-1 d-flex align-items-center" id="mb">
<svg class="i30 me-1" viewBox="0 0 30 30"><circle cx="15" cy="15" r="14" fill="#e0e0e0" stroke="#999"/><circle cx="15" cy="15" r="12" fill="#c4151b"/><path d="M3.500 13a12 12 0 0 1 23 0c-6 4-17 4-23 0z" fill="#e05f5c"/><path d="M10 10l10 10M20 10L10 20" stroke="#fff" stroke-width="4"/></svg>Файл D:\J5OLT\j5ls_l43T.j5 поврежден!</div>
<div class="msg-foot d-flex align-items-center justify-content-end flex-shrink-0"><button class="bare okbtn">OK</button></div>
</div>
</section>

<section class="aero mini position-absolute d-flex align-items-center">
<svg class="i14 me-1"><use href="#chip"/></svg><span class="mini-t text-nowrap">Д...</span>
<div class="ctl d-flex align-self-start">
<button class="bare" aria-label="Восстановить"><svg width="16" height="12"><use href="#restore"/></svg></button>
<button class="bare" aria-label="Развернуть"><svg width="16" height="12"><use href="#max"/></svg></button>
<button class="bare" aria-label="Закрыть"><svg width="16" height="12"><use href="#cross"/></svg></button>
</div>
</section>
</div>
<script src="https://cdn.jsdelivr.net/npm/bootstrap@5.3.0/dist/js/bootstrap.bundle.min.js"></script>
</body>
</html>
